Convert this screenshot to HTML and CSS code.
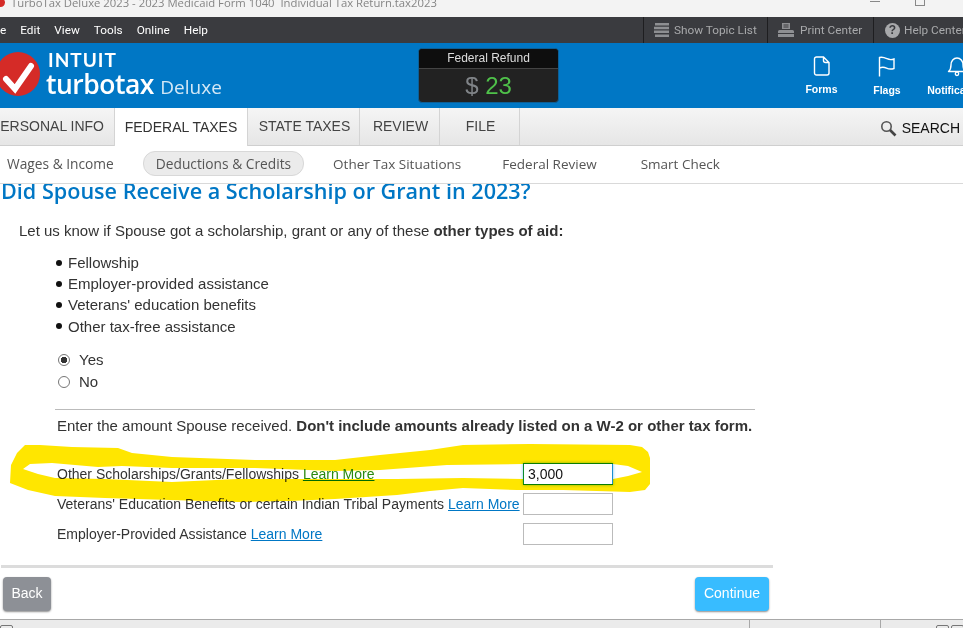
FILE: index.html
```html
<!DOCTYPE html>
<html lang="en">
<head>
    <meta charset="UTF-8">
    <title>TurboTax Deluxe 2023</title>
    <link rel="stylesheet" href="styles.css">
</head>
<body>
<div id="app">
    <div class="titlebar">
        <span class="app-dot"></span>
        <span class="title-text">TurboTax Deluxe 2023 - 2023 Medicaid Form 1040&nbsp; Individual Tax Return.tax2023</span>
        <span class="win-btns">
            <i class="win-min"></i>
            <i class="win-max"></i>
        </span>
    </div>

    <div class="menubar">
        <div class="menu-left">
            <span class="menu-file">e</span>
            <span>Edit</span>
            <span>View</span>
            <span>Tools</span>
            <span>Online</span>
            <span>Help</span>
        </div>
        <div class="menu-right">
            <div class="menu-tool tool-topics">
                <svg width="15" height="14" viewBox="0 0 15 14"><path d="M1 0h14v2.500H1zM0 3.800h15v2.500H0zM0 7.600h15v2.500H0zM1 11.400h14V14H1z" fill="#8e8f92"/></svg>
                <span>Show Topic List</span>
            </div>
            <div class="menu-tool tool-print">
                <svg width="16" height="14" viewBox="0 0 16 14"><path d="M4 0h8v6H4zM1.500 7h13a1.500 1.500 0 0 1 1.500 1.500V14H0V8.500A1.500 1.500 0 0 1 1.500 7z" fill="#8e8f92"/><path d="M5.500 2h5M5.500 4h5M0 10.500h16" stroke="#3a3b3f"/></svg>
                <span>Print Center</span>
            </div>
            <div class="menu-tool tool-help">
                <span class="help-icon">?</span>
                <span>Help Center</span>
            </div>
        </div>
    </div>

    <div class="brandbar">
        <div class="logo">
            <svg class="logo-mark" width="44" height="46" viewBox="0 0 44 46">
                <circle cx="22" cy="23" r="22" fill="#d52b27"/>
                <path d="M10 28l9 10L35 15" fill="none" stroke="#fff" stroke-width="6" stroke-linecap="round"/>
            </svg>
            <div class="logo-text">
                <div class="logo-intuit">INTUIT</div>
                <div class="logo-line"><span class="logo-tt">turbotax</span> <span class="logo-deluxe">Deluxe</span></div>
            </div>
        </div>
        <div class="refund">
            <div class="refund-head">Federal Refund</div>
            <div class="refund-amount"><span class="refund-sign">$</span> <span class="refund-num">23</span></div>
        </div>
        <div class="brand-icons">
            <div class="brand-icon icon-forms">
                <svg width="18" height="20" viewBox="0 0 18 20"><path d="M3.500 1h7l5.500 5.500v10.500a2 2 0 0 1-2 2H3.500a2 2 0 0 1-2-2V3a2 2 0 0 1 2-2zM10.500 1.500v3a2 2 0 0 0 2 2h3" fill="none" stroke="#fff" stroke-width="1.400"/></svg>
                <span>Forms</span>
            </div>
            <div class="brand-icon icon-flags">
                <svg width="18" height="21" viewBox="0 0 18 21"><path d="M1.500 20.500V1.500c3-1 5 0 7.500 1.200s4.500 1.200 7 .3v9.500c-3 1-5 .8-7.500-.4S4 10.800 1.500 12" fill="none" stroke="#fff" stroke-width="1.400"/></svg>
                <span>Flags</span>
            </div>
            <div class="brand-icon icon-notif">
                <svg width="20" height="21" viewBox="0 0 20 21"><path d="M1.500 15.500c2-1.500 2.500-3 2.500-6.500 0-4 2.500-7 6-7s6 3 6 7c0 3.500.5 5 2.500 6.500z" fill="none" stroke="#fff" stroke-width="1.400" stroke-linejoin="round"/><circle cx="10" cy="17.800" r="1.700" fill="none" stroke="#fff" stroke-width="1.300"/></svg>
                <span>Notifications</span>
            </div>
        </div>
    </div>

    <div class="tabs">
        <div class="tab tab-personal">PERSONAL INFO</div>
        <div class="tab tab-federal on">FEDERAL TAXES</div>
        <div class="tab tab-state">STATE TAXES</div>
        <div class="tab tab-review">REVIEW</div>
        <div class="tab tab-file">FILE</div>
        <div class="search">
            <svg width="17" height="17" viewBox="0 0 17 17"><circle cx="6.500" cy="6.500" r="4.700" fill="none" stroke="#555" stroke-width="1.600"/><path d="M10 10l5.500 5.500" stroke="#444" stroke-width="2.600"/></svg>
            <span>SEARCH</span>
        </div>
    </div>

    <div class="subnav">
        <span class="sub-item sub-wages">Wages &amp; Income</span>
        <span class="sub-item sub-deductions on">Deductions &amp; Credits</span>
        <span class="sub-item sub-other">Other Tax Situations</span>
        <span class="sub-item sub-review">Federal Review</span>
        <span class="sub-item sub-check">Smart Check</span>
    </div>

    <div class="content">
        <h1>Did Spouse Receive a Scholarship or Grant in 2023?</h1>
        <p class="intro">Let us know if Spouse got a scholarship, grant or any of these <b>other types of aid:</b></p>
        <ul class="aid-list">
            <li>Fellowship</li>
            <li>Employer-provided assistance</li>
            <li>Veterans' education benefits</li>
            <li>Other tax-free assistance</li>
        </ul>
        <div class="radios">
            <div class="radio-row"><span class="radio checked"></span>Yes</div>
            <div class="radio-row"><span class="radio"></span>No</div>
        </div>
        <div class="amounts">
            <p class="amount-intro">Enter the amount Spouse received. <b>Don't include amounts already listed on a W-2 or other tax form.</b></p>
            <div class="amount-row">
                <span>Other Scholarships/Grants/Fellowships <a class="more more-marked" href="#">Learn More</a></span>
                <span class="amount-input focus">3,000</span>
            </div>
            <div class="amount-row">
                <span>Veterans' Education Benefits or certain Indian Tribal Payments <a class="more" href="#">Learn More</a></span>
                <span class="amount-input"></span>
            </div>
            <div class="amount-row">
                <span>Employer-Provided Assistance <a class="more" href="#">Learn More</a></span>
                <span class="amount-input"></span>
            </div>
        </div>
        <div class="actions">
            <span class="btn btn-back">Back</span>
            <span class="btn btn-continue">Continue</span>
        </div>
    </div>

    <div class="statusbar">
        <span class="status-cell status-a"><i class="status-box"></i></span>
        <span class="status-cell status-b"></span>
        <span class="status-cell status-c"><i class="status-box"></i><i class="status-box"></i></span>
    </div>

    <svg class="highlight" width="963" height="628" viewBox="0 0 963 628">
        <path d="M25 445L17 453L11 465L10 483L28 490L55 496L105 498L170 500L238 502L290 501L335 499L397 495L430 491L463 488L517 490L563 490L630 492L645 490L650 484L650 458L648 452L642 447L630 445L530 444L463 445L430 450L380 455L335 460L255 460L172 457L132 453L118 448L72 447L40 445ZM23 469L30 464L52 463L98 467L122 466L172 468L255 468L335 471L380 470L447 465L523 464L613 464L628 466L642 472L628 476L613 479L613 484L523 484L523 479L463 478L397 479L335 479L238 479L172 482L105 479L55 478L38 474Z" fill="#ffe600" fill-rule="evenodd"/>
    </svg>
</div>
</body>
</html>
```

FILE: styles.css
```css
* {
    margin: 0;
    padding: 0;
    box-sizing: border-box;
}

html, body {
    width: 963px;
    height: 628px;
    overflow: hidden;
    background: #fff;
}

body {
    font-family: "Liberation Sans", Arial, sans-serif;
    color: #333;
}

#app {
    position: relative;
    width: 963px;
    height: 628px;
    display: flex;
    flex-direction: column;
    overflow: hidden;
}

.titlebar {
    height: 17px;
    flex: none;
    display: flex;
    align-items: flex-end;
    background: #f3f3f3;
    overflow: hidden;
}

.app-dot {
    width: 9px;
    height: 9px;
    margin-left: -4px;
    margin-bottom: 10px;
    border-radius: 50%;
    background: #d52b27;
}

.title-text {
    margin-left: 6px;
    margin-bottom: 6px;
    font-family: "Open Sans", sans-serif;
    font-size: 11.300px;
    line-height: 16px;
    color: #858585;
    white-space: nowrap;
}

.win-btns {
    margin-left: auto;
    display: flex;
    align-items: flex-start;
    align-self: flex-start;
}

.win-min {
    width: 10px;
    height: 1px;
    margin-top: 1px;
    margin-right: 35px;
    background: #888;
}

.win-max {
    width: 10px;
    height: 6px;
    margin-right: 38px;
    border: 1px solid #888;
    border-top: 0;
}

.menubar {
    height: 26px;
    flex: none;
    display: flex;
    justify-content: space-between;
    background: #3a3b3f;
    color: #fff;
    font-family: Roboto, sans-serif;
    font-size: 11.800px;
}

.menu-left {
    display: flex;
    align-items: center;
    gap: 14px;
}

.menu-right {
    display: flex;
    width: 320px;
    flex: none;
    overflow: hidden;
}

.menu-tool {
    display: flex;
    align-items: center;
    gap: 5px;
    flex: none;
    padding-left: 10px;
    border-left: 1px solid #1e1e20;
    color: #a8a9ab;
    white-space: nowrap;
}

.tool-topics {
    width: 124px;
}

.tool-print {
    width: 106px;
}

.tool-help {
    gap: 4px;
    padding-left: 11px;
}

.tool-print svg {
    margin-right: 1px;
}

.help-icon {
    width: 15px;
    height: 15px;
    border-radius: 50%;
    background: #a8a9ab;
    color: #3a3b3f;
    font: bold 12px/15px "Liberation Sans", sans-serif;
    text-align: center;
}

.brandbar {
    height: 65px;
    flex: none;
    display: flex;
    background: #0077c5;
    color: #fff;
}

.logo {
    width: 416px;
    flex: none;
    display: flex;
    margin-left: -4px;
}

.logo-mark {
    margin-top: 8px;
    flex: none;
}

.logo-text {
    margin-left: 6px;
}

.logo-intuit {
    margin-top: 7px;
    margin-left: 2px;
    font-family: "Lato", sans-serif;
    font-size: 19px;
    line-height: 20px;
    font-weight: 700;
    letter-spacing: 1px;
}

.logo-line {
    line-height: 28px;
    white-space: nowrap;
}

.logo-tt {
    font-family: "Open Sans", sans-serif;
    font-size: 26.500px;
    font-weight: 600;
    letter-spacing: -0.500px;
}

.logo-deluxe {
    margin-left: 2px;
    font-family: "Open Sans", sans-serif;
    font-size: 19px;
    color: #d4e8f6;
}

.refund {
    width: 141px;
    height: 55px;
    flex: none;
    margin-top: 5px;
    margin-left: 6px;
    border-radius: 4px;
    background: #222;
    border: 1px solid #0d5f96;
    overflow: hidden;
}

.refund-head {
    height: 20px;
    background: #0e0e0e;
    border-bottom: 1px solid #444;
    font-size: 12px;
    line-height: 19px;
    text-align: center;
    color: #ddd;
}

.refund-amount {
    font-size: 24px;
    line-height: 33px;
    text-align: center;
}

.refund-sign {
    color: #808488;
}

.refund-num {
    color: #4fc14a;
}

.brand-icons {
    display: flex;
    flex: none;
    margin-left: 246px;
}

.brand-icon {
    display: flex;
    flex-direction: column;
    align-items: center;
    gap: 7px;
    padding-top: 13px;
    font-size: 10.500px;
    font-weight: bold;
    white-space: nowrap;
}

.icon-forms {
    width: 33px;
}

.icon-flags {
    width: 30px;
    margin-left: 34px;
}

.icon-notif {
    width: 66px;
    margin-left: 24px;
}

.icon-notif svg {
    margin-left: -4px;
}

.tabs {
    height: 38px;
    flex: none;
    display: flex;
    background: linear-gradient(#f5f5f5, #e6e6e6);
    border-bottom: 1px solid #cfcfcf;
    font-size: 14px;
    color: #444;
}

.tab {
    display: flex;
    align-items: center;
    justify-content: center;
    flex: none;
    height: 37px;
    padding-bottom: 2px;
    padding-left: 2px;
    border-right: 1px solid #d4d4d4;
    white-space: nowrap;
}

.tab-personal {
    width: 114px;
    justify-content: flex-end;
    padding-right: 10px;
    padding-left: 0;
    border-right: 0;
}

.tab-federal {
    width: 134px;
}

.tab.on {
    height: 38px;
    padding-bottom: 0;
    padding-left: 0;
    background: #fff;
    color: #333;
    border-left: 1px solid #d4d4d4;
    border-right: 1px solid #d4d4d4;
}

.tab-state {
    width: 112px;
}

.tab-review {
    width: 80px;
}

.tab-file {
    width: 80px;
}

.search {
    display: flex;
    align-items: center;
    gap: 5px;
    margin-left: auto;
    margin-right: 3px;
    padding-top: 3px;
    color: #111;
}

.subnav {
    height: 38px;
    flex: none;
    display: flex;
    align-items: center;
    border-bottom: 1px solid #d9d9d9;
    font-family: "Open Sans", sans-serif;
    font-size: 13.750px;
    color: #555;
    padding-left: 7px;
    padding-bottom: 2px;
}

.sub-item {
    flex: none;
    white-space: nowrap;
}

.sub-deductions {
    margin-left: 29px;
}

.sub-item.on {
    padding: 2px 12px;
    border: 1px solid #d8d8d8;
    border-radius: 12px;
    background: #ebebeb;
}

.sub-other {
    margin-left: 29px;
    font-size: 13.500px;
}

.sub-review {
    margin-left: 41px;
    font-size: 13.500px;
}

.sub-check {
    margin-left: 44px;
    font-size: 13.500px;
}

.content {
    flex: 1;
    min-height: 0;
    display: flex;
    flex-direction: column;
    overflow: hidden;
    font-size: 15px;
}

h1 {
    margin-top: -7px;
    margin-left: 1px;
    font-family: "Open Sans", sans-serif;
    font-size: 21.600px;
    line-height: 27px;
    font-weight: 600;
    color: #0077c5;
    white-space: nowrap;
}

.intro {
    margin-top: 17px;
    margin-left: 19px;
    line-height: 20px;
}

.aid-list {
    margin-top: 11px;
    margin-left: 56px;
    line-height: 21.200px;
    list-style: none;
}

.aid-list li {
    display: flex;
    align-items: center;
}

.aid-list li::before {
    content: "";
    width: 6px;
    height: 6px;
    margin-right: 6px;
    border-radius: 50%;
    background: #111;
}

.radios {
    margin-top: 12px;
    margin-left: 58px;
}

.radio-row {
    display: flex;
    align-items: center;
    height: 22px;
    gap: 9px;
}

.radio {
    width: 12px;
    height: 12px;
    border: 1px solid #767676;
    border-radius: 50%;
    background: #fff;
}

.radio.checked {
    background: radial-gradient(circle, #333 0 3px, #fff 3.500px);
}

.amounts {
    margin-top: 16px;
    margin-left: 55px;
    width: 700px;
}

.amount-intro {
    padding-top: 6px;
    padding-left: 2px;
    border-top: 1px solid #bbb;
    line-height: 20px;
    white-space: nowrap;
}

.amount-row {
    display: flex;
    justify-content: space-between;
    align-items: center;
    width: 556px;
    height: 22px;
    margin-left: 2px;
    margin-bottom: 8px;
    font-size: 14px;
    white-space: nowrap;
}

.amount-intro + .amount-row {
    margin-top: 27px;
}

.more {
    color: #0077c5;
}

.more-marked {
    color: #2a8a10;
    text-decoration-color: #0077c5;
}

.amount-input {
    width: 90px;
    height: 22px;
    flex: none;
    padding-left: 4px;
    border: 1px solid #bbb;
    font-size: 14px;
    line-height: 20px;
    color: #111;
}

.amount-input.focus {
    border-color: #0a8a2a #1a8fd0 #0a8a2a #0a8a2a;
    box-shadow: 0 0 3px #7cc4f0;
}

.actions {
    display: flex;
    justify-content: space-between;
    width: 772px;
    height: 51px;
    margin-top: 12px;
    margin-left: 1px;
    border-top: 3px solid #dcdcdc;
    padding: 9px 4px 0 2px;
}

.btn {
    height: 34px;
    border-radius: 4px;
    color: #fff;
    font-size: 14px;
    line-height: 32px;
    text-align: center;
    box-shadow: 0 1px 2px rgba(0, 0, 0, .45);
}

.btn-back {
    width: 48px;
    background: #8d9096;
}

.btn-continue {
    width: 74px;
    background: #38bcff;
}

.statusbar {
    height: 9px;
    flex: none;
    display: flex;
    background: #ebebeb;
    border-top: 1px solid #a8a8a8;
}

.status-cell {
    flex: none;
    border-right: 1px solid #a8a8a8;
}

.status-a {
    width: 750px;
}

.status-b {
    width: 131px;
}

.status-c {
    display: flex;
    gap: 2px;
    padding-left: 55px;
    border-right: 0;
}

.status-box {
    display: block;
    width: 13px;
    height: 8px;
    margin-top: 5px;
    border: 1px solid #777;
    border-radius: 2px;
}

.highlight {
    position: absolute;
    left: 0;
    top: 0;
    mix-blend-mode: multiply;
    pointer-events: none;
}
```
